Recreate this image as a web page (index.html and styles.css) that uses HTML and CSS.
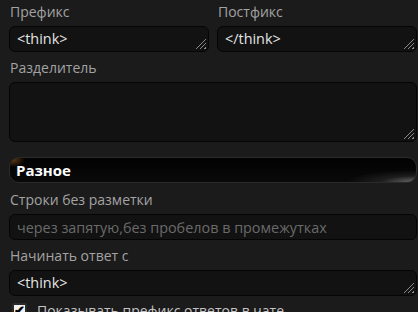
FILE: index.html
```html
<!DOCTYPE html>
<html lang="ru">
<head>
    <meta charset="UTF-8">
    <title>Настройки</title>
    <link rel="stylesheet" href="styles.css">
</head>
<body>
    <div class="panel">
        <div class="row">
            <div class="col">
                <label class="label">Префикс</label>
                <textarea class="field handle" rows="1">&lt;think&gt;</textarea>
            </div>
            <div class="col">
                <label class="label">Постфикс</label>
                <textarea class="field handle" rows="1">&lt;/think&gt;</textarea>
            </div>
        </div>
        <label class="label">Разделитель</label>
        <textarea class="field handle tall"></textarea>

        <div class="drawer-header">
            <b>Разное</b>
        </div>

        <label class="label">Строки без разметки</label>
        <input class="field" type="text" placeholder="через запятую,без пробелов в промежутках">

        <label class="label">Начинать ответ с</label>
        <textarea class="field handle" rows="1">&lt;think&gt;</textarea>

        <label class="check">
            <span class="box">✔</span>
            Показывать префикс ответов в чате
        </label>
    </div>
</body>
</html>
```

FILE: styles.css
```css
body {
    margin: 0;
    background-color: #1b1b1b;
    font-family: "Open Sans", sans-serif;
    font-size: 14px;
    color: #dcdcdc;
    overflow: hidden;
}
.panel {
    display: flex;
    flex-direction: column;
    padding: 2px 1px 0 9px;
}
.row {
    display: flex;
    gap: 8px;
}
.col {
    flex: 1;
    display: flex;
    flex-direction: column;
}
.label {
    color: #a3a3a3;
    line-height: 20px;
    padding-left: 1px;
    margin-bottom: 4px;
}
.field {
    box-sizing: border-box;
    display: block;
    width: 100%;
    height: 26px;
    margin: 0 0 6px;
    padding: 3px 7px;
    background-color: #121212;
    border: 1px solid #050505;
    border-radius: 6px;
    color: #e4e4e4;
    font-family: "Open Sans", sans-serif;
    font-size: 14.4px;
    line-height: 18px;
    resize: none;
    overflow: hidden;
    outline: none;
}
.field::placeholder {
    color: #6a6a6a;
}
.handle {
    background:
        linear-gradient(135deg, #121212 50%, transparent 50%) right 2px bottom 2px / 11px 11px no-repeat,
        repeating-linear-gradient(135deg, transparent 0 2px, #8a8a8a 2px 3px) right 2px bottom 2px / 11px 11px no-repeat,
        #121212;
}
.tall {
    height: 60px;
}
.drawer-header {
    margin: 9px 0 7px;
    height: 26px;
    box-sizing: border-box;
    padding: 0 6px;
    display: flex;
    align-items: center;
    border: 1px solid #2a2a2a;
    border-radius: 10px;
    color: #ffffff;
    font-size: 15px;
    background:
        radial-gradient(ellipse 12px 7px at 3px 2px, rgba(170, 100, 30, 0.55), transparent),
        radial-gradient(ellipse 70px 12px at 100% 100%, #6a6a6a, rgba(60, 60, 60, 0.4) 50%, transparent),
        linear-gradient(to bottom, #020202, #090909);
}
.drawer-header b {
    font-weight: 700;
}
.check {
    display: flex;
    align-items: flex-start;
    gap: 10px;
    margin: 0 0 0 3px;
    color: #c4c4c4;
    line-height: 18px;
}
.box {
    box-sizing: border-box;
    width: 15px;
    height: 15px;
    margin-top: 1px;
    background: #f0f0f0;
    border: 2px solid #2a2a2a;
    border-radius: 2px;
    color: #000;
    font-size: 13px;
    font-weight: 700;
    line-height: 11px;
    text-align: center;
}
```
